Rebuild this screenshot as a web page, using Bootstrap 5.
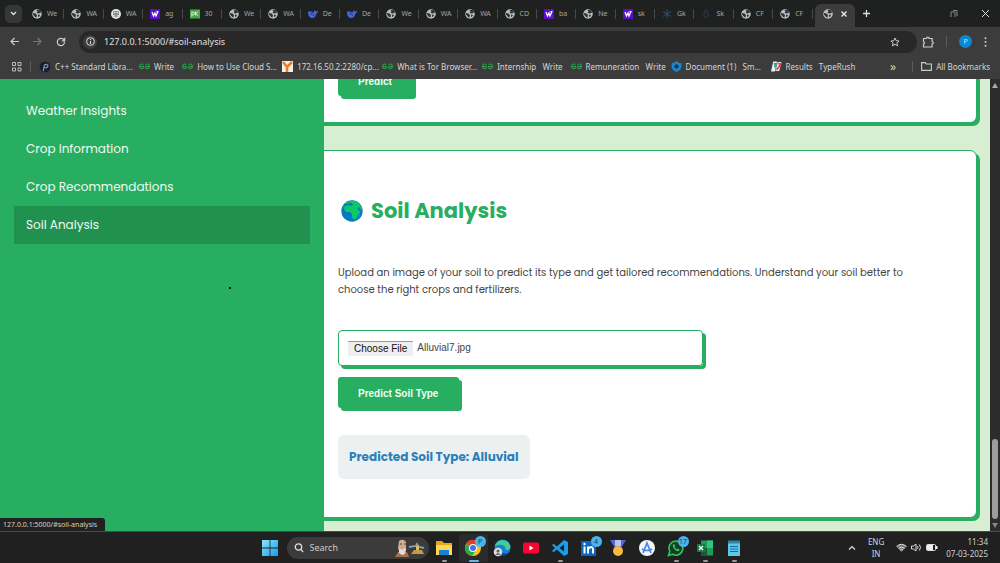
<!DOCTYPE html>
<html lang="en">
<head>
<meta charset="utf-8">
<meta name="viewport" content="width=device-width, initial-scale=1">
<title>Soil Analysis</title>
<link href="https://cdn.jsdelivr.net/npm/bootstrap@5.3.0/dist/css/bootstrap.min.css" rel="stylesheet">
<style>
:root{--leaf:#28ae60;--bar:#3c3c3c;--strip:#1f2120}
body{font-family:"Poppins","Inter",sans-serif;background:var(--strip)}
.chrome-ui,.os-bar,.status-tip{font-family:"Segoe UI","Noto Sans",sans-serif;font-size:8px;line-height:12px;color:#d2d2d2}
svg{display:block;flex:none}
button{font-family:inherit}
.ghost{background:none;border:0;padding:0;color:inherit;font-size:inherit;line-height:inherit}
/* tab strip */
.tab-strip{height:27px;background:var(--strip)}
.tab-menu{width:17px;height:18px;margin:0 3px 0 5px;border-radius:5px;background:#363837}
.tab-row{flex:1 1 0;min-width:0;height:27px}
.tab-item{flex:1 1 0;min-width:0;height:27px;padding-left:7px;gap:5px;color:#a4a4a4}
.tab-item .tab-name{font-size:7px;white-space:nowrap}
.tab-item::after{content:"";width:1px;height:10px;background:#484848;margin-left:auto}
.tab-item.current{background:var(--bar);border-radius:6px 6px 0 0;height:23px;align-self:end;color:#eee;margin-left:2px;padding:0 0 4px 8px;gap:8px}
.tab-item.current::after{display:none}
.strip-end{width:145px;padding:0 11px 0 8px}
/* toolbar */
.tool-row{background:var(--bar);height:29px;padding:0 10px}
.nav-btns{gap:14px;width:69px}
.address{background:#282828;border-radius:11px;height:22px;padding:0 17px 0 4px;gap:7px}
.info-dot{width:14px;height:14px;border-radius:50%;background:#3c3c3c}
.address input{background:none;border:0;outline:0;color:#e0e0e0;font-size:9px;height:16px;padding:0;min-width:0}
.tool-end{width:73px;padding:0 3px 0 5px}
.avatar{width:13px;height:13px;border-radius:50%;background:#0d87cf;color:#bfe2f7;font-size:7px}
.v-line{width:1px;height:11px;background:#5c5c5c;flex:none}
.mark-row{background:var(--bar);height:23px;padding:0 10px 2px 12px}
.mark-link{color:#d6d6d6;text-decoration:none;white-space:nowrap;gap:4px;padding-right:8px;flex:none}
.mark-wide{width:100px}
.more-marks{font-size:12px}
/* page */
.page-area{background:#d8eed3;min-height:0}
.side{flex:0 0 32.4%;background:var(--leaf);padding:13px 14px;z-index:1}
.side a{color:#eefaf2;font-size:12px;line-height:18px;padding:10px 12px;text-decoration:none;display:block}
.side a.active{background:#219150}
.pointer-dot{left:229px;top:208px;width:2px;height:2px;background:#06190e;z-index:2}
.feed{min-width:0;justify-content:flex-end;gap:27px;padding:0 13px 13px 0}
.panel,.file-box,.go{box-shadow:3px 3px 0 var(--leaf)}
/* the panels' left edge slides under the sidebar */
.panel{background:#fff;border:1px solid var(--leaf);border-radius:7px;margin-left:-16px;padding:44px 14px 38px 29px;flex:none}
.panel-prev{padding-top:0;padding-bottom:26px}
.panel h2{color:var(--leaf);font-size:21px;line-height:32px;font-weight:700;gap:8px;margin:0 0 37px;padding-left:3px}
.panel p{font-size:10px;line-height:17px;color:#444;margin:0 0 32px}
.file-box{max-width:365px;height:36px;border:1px solid var(--leaf);border-radius:4px;padding:0 9px;font-family:"Liberation Sans",sans-serif;font-size:10px;line-height:14px;color:#444;gap:4px;margin-bottom:11px;cursor:pointer}
.file-btn{background:#efefef;border-top:1px solid #999;color:#111;padding:0 6px}
.go{background:var(--leaf);color:#f2fff6;border:0;border-radius:3px;font-family:"Liberation Sans",sans-serif;font-weight:700;font-size:10px;line-height:15px;padding:9px 21px 7px 20px}
.result{background:#ecf0f1;border-radius:6px;color:#2980b9;font-weight:700;font-size:12px;line-height:18px;padding:13px 11px;margin-top:27px}
.scroller{width:10px;background:#2c2c2c;padding:4px 0 3px}
.thumb{width:6px;height:80px;background:#9d9d9d;border-radius:3px}
.status-tip{left:0;bottom:0;background:#202221;border-radius:0 3px 0 0;padding:1px 8px 0 3px;height:13px;font-size:7px;z-index:2}
/* taskbar */
.os-bar{height:32px;background:#202020;border-top:1px solid #474d49;display:grid;grid-template-columns:1fr auto 1fr}
.apps{padding-left:10px}
.search-box{width:142px;height:22px;border-radius:11px;background:#3b3b3b;padding:0 4px 0 7px;gap:6px;margin:0 1px 0 9px}
.search-box input{background:none;border:0;outline:0;padding:0;width:60px;font-size:9px;color:#ddd}
.search-box input::placeholder{color:#ccc;opacity:1}
.app{width:29px;height:28px;position:relative}
.app svg{width:18px;height:18px}
.app.open::after{content:"";position:absolute;bottom:0;left:12px;width:5px;height:2px;border-radius:1px;background:#999}
.app.front{background:#2b2b2b;border-radius:3px}
.app.front::after{left:10px;width:10px;background:#63b9ee}
.pip{position:absolute;top:2px;right:2px;width:11px;height:11px;border-radius:50%;background:#4db3ec;color:#123d5c;font-size:7px;line-height:11px;text-align:center}
.tray{gap:8px;padding-right:12px}
</style>
</head>
<body class="vh-100 d-flex flex-column overflow-hidden">
<svg width="0" height="0" class="position-absolute" aria-hidden="true">
<symbol id="globe" viewBox="0 0 20 20"><circle cx="10" cy="10" r="9.5" fill="#b9bec3"/><path d="M2 8l5 1 3 3-1 5-3-1-4-5zM9 2l2 3-2 2 3 2 5-1 1-2-3-4zM12 11l4 1-2 4-2-1z" fill="#303336"/></symbol>
<symbol id="seal" viewBox="0 0 20 20"><circle cx="10" cy="10" r="10" fill="#e4e4e4"/><path d="M5 5h10v4H5zM4 11h12M5 14h10M10 4v13" stroke="#777" stroke-width="1.5" fill="none"/></symbol>
<symbol id="wtile" viewBox="0 0 20 20"><path fill="#5a0fc8" d="M0 0h20v20H0z"/><path d="M4 6l3 8 3-6 2 6 4-9M13 5h4" fill="none" stroke="#fff" stroke-width="2.5"/></symbol>
<symbol id="px" viewBox="0 0 22 20"><path fill="#45a845" d="M0 0h22v20H0z"/><path d="M4 16V6h3a2 2 0 010 6H4M12 5v8M12 9l6-4M12 9l6 5" stroke="#dff5df" stroke-width="2" fill="none"/></symbol>
<symbol id="whale" viewBox="0 0 20 20"><path fill="#4565dd" d="M0 6c4-3 8 0 10 2 2-1 2-4 2-6 2 1 2 3 4 3l4-2c0 4-2 6-4 7 0 5-3 8-8 8S0 13 0 6z"/><path d="M5 9c3 0 5 3 7 5" stroke="#1f2120" stroke-width="1.500" fill="none"/></symbol>
<symbol id="flake" viewBox="0 0 20 20"><path d="M10 1v18M2 5l16 10M18 5L2 15" stroke="#2b4568" stroke-width="2.5"/></symbol>
<symbol id="drop" viewBox="0 0 20 20"><path d="M10 2c-4 6-5 8-4 11 2 5 7 5 8 0 1-3 0-5-4-11z" fill="none" stroke="#24334d" stroke-width="3"/></symbol>
<symbol id="gfg" viewBox="0 0 20 12"><path d="M8 3C5 0 1 2 1 6s5 5 7 2V6H1M12 3c3-3 7-1 7 3s-5 5-7 2V6h7" fill="none" stroke="#2f9a4b" stroke-width="2"/></symbol>
</svg>

<header class="chrome-ui flex-shrink-0">
  <div class="tab-strip d-flex align-items-center">
    <button class="ghost tab-menu d-flex align-items-center justify-content-center" aria-label="Search tabs"><svg width="7" height="5" viewBox="0 0 7 5"><path d="M1 1l2.500 2.500L6 1" fill="none" stroke="#ddd" stroke-width="1.400"/></svg></button>
    <nav class="tab-row d-flex" id="tabs" aria-label="Tabs"></nav>
    <div class="strip-end d-flex align-items-center">
      <button class="ghost" aria-label="New tab"><svg width="7" height="7" viewBox="0 0 7 7"><path d="M3.500 0v7M0 3.500h7" stroke="#ddd" stroke-width="1.300"/></svg></button>
      <button class="ghost ms-auto" aria-label="Restore"><svg width="8" height="7" viewBox="0 0 8 7"><path d="M1 7V2h4v5M3 .5h4V6" fill="none" stroke="#888"/></svg></button>
      <button class="ghost ms-4" aria-label="Close"><svg width="7" height="7" viewBox="0 0 7 7"><path d="M0 0l7 7M7 0L0 7" stroke="#ddd"/></svg></button>
    </div>
  </div>
  <div class="tool-row d-flex align-items-center">
    <div class="nav-btns d-flex align-items-center flex-shrink-0">
      <button class="ghost" aria-label="Back"><svg width="9" height="9" viewBox="0 0 9 9"><path d="M9 4.500H1M4.500 1L1 4.500 4.500 8" fill="none" stroke="#ccc" stroke-width="1.200"/></svg></button>
      <button class="ghost" aria-label="Forward"><svg width="9" height="9" viewBox="0 0 9 9"><path d="M0 4.500h8M4.500 1L8 4.500 4.500 8" fill="none" stroke="#777" stroke-width="1.200"/></svg></button>
      <button class="ghost" aria-label="Reload"><svg width="10" height="10" viewBox="0 0 10 10"><path d="M8.500 5A3.600 3.600 0 115 1.400c1.500 0 2.600.6 3.500 2M8.700.8v3H5.800" fill="none" stroke="#ccc" stroke-width="1.200"/></svg></button>
    </div>
    <div class="address d-flex align-items-center flex-grow-1">
      <span class="info-dot d-flex align-items-center justify-content-center"><svg width="9" height="9" viewBox="0 0 9 9"><circle cx="4.500" cy="4.500" r="3.900" fill="none" stroke="#ddd"/><path d="M4.500 4v3M4.500 2v1" stroke="#ddd"/></svg></span>
      <input class="flex-grow-1" aria-label="Address" value="127.0.0.1:5000/#soil-analysis">
      <svg width="10" height="10" viewBox="0 0 20 20"><path d="M10 2l2.400 5.400 5.800.6-4.400 3.900 1.300 5.800L10 14.700l-5.100 3 1.300-5.800L1.800 8l5.800-.6z" fill="none" stroke="#ccc" stroke-width="2"/></svg>
    </div>
    <div class="tool-end d-flex align-items-center justify-content-between flex-shrink-0">
      <svg width="12" height="12" viewBox="0 0 12 12"><path d="M1.500 2.500h3a1.300 1.300 0 012.600 0h3v3a1.200 1.200 0 010 2.400V11H1.500V8a1.300 1.300 0 000-2.500z" fill="none" stroke="#ccc" stroke-width="1.200"/></svg>
      <span class="v-line"></span>
      <button class="ghost avatar" aria-label="Profile">P</button>
      <svg width="3" height="10" viewBox="0 0 3 10" fill="#ccc"><circle cx="1.500" cy="1.200" r="1"/><circle cx="1.500" cy="5" r="1"/><circle cx="1.500" cy="8.800" r="1"/></svg>
    </div>
  </div>
  <nav class="mark-row d-flex align-items-center" aria-label="Bookmarks">
    <svg width="10" height="10" viewBox="0 0 10 10" fill="none" stroke="#bbb"><path d="M.5.5h3v3h-3zM6 .5h3v3H6zM.5 6h3v3h-3zM6 6h3v3H6z"/></svg>
    <span class="v-line mx-2"></span>
    <a href="#" class="mark-link mark-wide d-flex align-items-center"><svg width="12" height="12" viewBox="0 0 20 20"><circle cx="10" cy="10" r="9" fill="#16202e"/><path d="M7 17L9 7c3-3 8 0 5 3-2 2-5 1-6 0" fill="none" stroke="#8799b4" stroke-width="2"/></svg><span>C++ Standard Libra...</span></a>
    <a href="#" class="mark-link d-flex align-items-center"><svg width="11" height="7"><use href="#gfg"/></svg><span>Write</span></a>
    <a href="#" class="mark-link mark-wide d-flex align-items-center"><svg width="11" height="7"><use href="#gfg"/></svg><span>How to Use Cloud S...</span></a>
    <a href="#" class="mark-link mark-wide d-flex align-items-center"><svg width="11" height="11" viewBox="0 0 11 11"><path fill="#f4eee8" d="M0 0h11v11H0z"/><path d="M1 1l4 5v5M10 1L5 6" fill="none" stroke="#ee7c22" stroke-width="2.500"/></svg><span>172.16.50.2:2280/cp...</span></a>
    <a href="#" class="mark-link mark-wide d-flex align-items-center"><svg width="11" height="7"><use href="#gfg"/></svg><span>What is Tor Browser...</span></a>
    <a href="#" class="mark-link d-flex align-items-center"><svg width="11" height="7"><use href="#gfg"/></svg><span>Internship &nbsp; Write</span></a>
    <a href="#" class="mark-link mark-wide d-flex align-items-center"><svg width="11" height="7"><use href="#gfg"/></svg><span>Remuneration &nbsp; Write</span></a>
    <a href="#" class="mark-link mark-wide d-flex align-items-center"><svg width="11" height="11" viewBox="0 0 20 20"><path d="M10 0l4 3 5 1v6l-2 6-7 4-7-4-2-6V4l5-1z" fill="#1687d9"/><path d="M10 5l5 5-5 5-5-5z" fill="#183b60"/></svg><span>Document (1) &nbsp; Sm...</span></a>
    <a href="#" class="mark-link d-flex align-items-center"><svg width="11" height="11" viewBox="0 0 20 20"><path d="M4 1h7L7 19H0z" fill="#e8edf0"/><path d="M12 2h7l-4 16H8z" fill="#e8e8e8"/><path d="M5 5h4l-2 4 1 3" fill="none" stroke="#11a6a0" stroke-width="3"/><path d="M13 5h5l-3 5-5 6" fill="none" stroke="#df3d4b" stroke-width="3"/></svg><span>Results &nbsp; TypeRush</span></a>
    <span class="more-marks ms-auto">»</span>
    <span class="v-line ms-3 me-2"></span>
    <a href="#" class="mark-link d-flex align-items-center pe-0"><svg width="11" height="9" viewBox="0 0 11 9"><path d="M.6.6h3.600l1 1.400h5.200v6.400H.6z" fill="none" stroke="#ccc" stroke-width="1.100"/></svg><span>All Bookmarks</span></a>
  </nav>
</header>

<main class="page-area flex-grow-1 d-flex position-relative overflow-hidden">
  <nav class="side" aria-label="Sections">
    <a href="#weather">Weather Insights</a>
    <a href="#crop-info">Crop Information</a>
    <a href="#crop-rec">Crop Recommendations</a>
    <a href="#soil-analysis" class="active" aria-current="true">Soil Analysis</a>
  </nav>
  <div class="feed flex-grow-1 d-flex flex-column">
    <section class="panel panel-prev"><button class="go">Predict</button></section>
    <section class="panel" id="soil-analysis">
      <h2 class="d-flex align-items-center"><svg width="22" height="22" viewBox="0 0 22 22"><circle cx="11" cy="11" r="10.700" fill="#0878c4"/><path d="M5 3c3-2.500 8-3 11-1 2 1 4 4 5 6l-1 2-2-3-2 1 2 3 2 0-3 4-1 3-3 2-2-3 0-3-2-2-4 0-2-3 1-3 4-1 1 1 3-1-1-2-3 0-2 1-3 0z" fill="#0ac966"/><path d="M2 6l2 0-1 2zM18 14l1 1-1 3z" fill="#0ac966"/></svg>Soil Analysis</h2>
      <p>Upload an image of your soil to predict its type and get tailored recommendations. Understand your soil better to <br>choose the right crops and fertilizers.</p>
      <label class="file-box d-flex align-items-center" for="soil-image"><input type="file" id="soil-image" class="visually-hidden" accept="image/*"><span class="file-btn">Choose File</span><span>Alluvial7.jpg</span></label>
      <button class="go d-block">Predict Soil Type</button>
      <div class="d-flex"><output class="result" for="soil-image">Predicted Soil Type: Alluvial</output></div>
    </section>
  </div>
  <div class="scroller d-flex flex-column align-items-center flex-shrink-0">
    <svg width="6" height="5" viewBox="0 0 6 5"><path d="M3 0l3 5H0z" fill="#aaa"/></svg>
    <div class="thumb mt-auto mb-1"></div>
    <svg width="6" height="5" viewBox="0 0 6 5"><path d="M3 5l3-5H0z" fill="#888"/></svg>
  </div>
  <span class="pointer-dot position-absolute"></span>
  <div class="status-tip position-absolute">127.0.0.1:5000/#soil-analysis</div>
</main>

<footer class="os-bar flex-shrink-0">
  <span></span>
  <div class="apps d-flex align-items-center">
    <button class="ghost" aria-label="Start"><svg width="16" height="16" viewBox="0 0 16 16"><defs><linearGradient id="win" x2="1" y2="1"><stop stop-color="#8ce5fb"/><stop offset="1" stop-color="#149be8"/></linearGradient></defs><path d="M0 0h7.600v7.600H0zM8.400 0H16v7.600H8.400zM0 8.400h7.600V16H0zM8.400 8.400H16V16H8.400z" fill="url(#win)"/></svg></button>
    <div class="search-box d-flex align-items-center">
      <svg width="10" height="10" viewBox="0 0 10 10"><circle cx="4.500" cy="4" r="3.200" fill="none" stroke="#ddd" stroke-width="1.300"/><path d="M6.800 6.400l2.400 2.800" stroke="#ddd" stroke-width="1.300"/></svg>
      <input type="text" placeholder="Search" aria-label="Search">
      <svg class="ms-auto" width="30" height="18" viewBox="0 0 30 18"><path d="M0 18l3-5 9 0 2 5z" fill="#a96f4c"/><path d="M4 2q4-3 7 1v8l-2 4-4-1-2-5z" fill="#cfaa91"/><path d="M4 9l3 2 4-2-1 6-3 1-3-2z" fill="#e4ded6"/><path d="M5 5h2M9 5h2" stroke="#604636"/><path d="M14 8l7-1 1-2 2 3 5 1" fill="none" stroke="#8aa0a4" stroke-width="1.800"/><path d="M16 15l3-4h8l2 4z" fill="#c19a43"/><path d="M21 7h3v4h-3z" fill="#e0bd69"/></svg>
    </div>
    <button class="ghost app open d-flex align-items-center justify-content-center" aria-label="Files"><svg viewBox="0 0 18 18"><path d="M1 2h6l2 2h8v12H1z" fill="#e8a51b"/><path d="M1 6h16v10H1z" fill="#ffd65b"/><path d="M4 11h10v5H4z" fill="#1681ce"/></svg></button>
    <button class="ghost app open front d-flex align-items-center justify-content-center" aria-label="Chrome"><svg viewBox="0 0 18 18"><circle cx="9" cy="9" r="8" fill="#fbc116"/><path d="M9 9L2 5a8 8 0 0114 0z" fill="#e43e2b"/><path d="M9 9L2 5a8 8 0 006 12l4-6z" fill="#2da94f"/><circle cx="9" cy="9" r="4" fill="#fff"/><circle cx="9" cy="9" r="3" fill="#3978e6"/></svg><span class="pip">P</span></button>
    <button class="ghost app d-flex align-items-center justify-content-center" aria-label="Edge"><svg viewBox="0 0 18 18"><circle cx="9.500" cy="8.500" r="8" fill="#1683d3"/><path d="M2 7c2-7 13-8 15.500 0 0 3-2 4-5 4 1-4-3-7-10.500-4z" fill="#3fcf96"/><path d="M7 9c0 4 4 6 8 5-2 3-8 4-11 0z" fill="#0a4a9c"/><circle cx="5" cy="13" r="4.300" fill="#ddd"/><circle cx="5" cy="12" r="1.600" fill="#666"/><path d="M2.500 16q2.500-4 5 0z" fill="#666"/></svg></button>
    <button class="ghost app d-flex align-items-center justify-content-center" aria-label="YouTube"><svg viewBox="0 0 18 18"><rect x="1" y="3.500" width="16" height="11" rx="2" fill="#fa0532"/><path d="M7.500 6.500l4 2.500-4 2.500z" fill="#fff"/></svg></button>
    <button class="ghost app open d-flex align-items-center justify-content-center" aria-label="Code"><svg viewBox="0 0 18 18"><path d="M13 1l4 2v12l-4 2-7-6.500-3.500 2.700L1 12l3-3-3-3 1.500-1.200L6 7.500zM13 5.500L8.500 9l4.500 3.500z" fill="#1c9be8" fill-rule="evenodd"/></svg></button>
    <button class="ghost app d-flex align-items-center justify-content-center" aria-label="LinkedIn"><svg viewBox="0 0 18 18"><path d="M1 2h15v15H1z" fill="#0a66c2"/><path d="M4.500 7.500v7M8 14.500v-7M8 10q4-4 5 0v4.500" stroke="#fff" stroke-width="2" fill="none"/><circle cx="4.500" cy="5" r="1.200" fill="#fff"/></svg><span class="pip">4</span></button>
    <button class="ghost app d-flex align-items-center justify-content-center" aria-label="Rewards"><svg viewBox="0 0 18 18"><path d="M1 1h5l6 8H6zM17 1h-5L6 9h6z" fill="#5368d4"/><path d="M6 1h6v6H6z" fill="#b7c4f4"/><circle cx="9" cy="12" r="5" fill="#f8b941"/></svg></button>
    <button class="ghost app d-flex align-items-center justify-content-center" aria-label="Studio"><svg viewBox="0 0 18 18"><circle cx="9" cy="9" r="8" fill="#f4f6fa"/><path d="M5 14L9 4l4 10M4 10q5 3 10 0" fill="none" stroke="#4a86e8" stroke-width="1.700"/></svg></button>
    <button class="ghost app open d-flex align-items-center justify-content-center" aria-label="WhatsApp"><svg viewBox="0 0 18 18"><path d="M1.500 16.500l1.200-4A7 7 0 115.500 15.300z" fill="#173e25" stroke="#2cc65c" stroke-width="1.600"/><path d="M6 5.500c-1 3 3 7.500 6 6.500l.5-1.500-2-1-1 .8-2-2.300.8-1L7.500 5z" fill="#2cc65c"/></svg><span class="pip">17</span></button>
    <button class="ghost app open d-flex align-items-center justify-content-center" aria-label="Excel"><svg viewBox="0 0 18 18"><path d="M5 1.500h12v15H5z" fill="#1f9c5d"/><path d="M11 1.500h6V9h-6z" fill="#35c481"/><path d="M5 9h6v7.500H5z" fill="#185c37"/><path d="M1 5h8v8H1z" fill="#107c41"/><path d="M3 7l4 4M7 7l-4 4" stroke="#fff" stroke-width="1.300"/></svg></button>
    <button class="ghost app open d-flex align-items-center justify-content-center" aria-label="Notepad"><svg viewBox="0 0 18 18"><path d="M3 2h12v15H3z" fill="#5cc8ee"/><path d="M3 1.500h12v3H3z" fill="#2b84a6"/><path d="M5 7.500h8M5 10h8M5 12.500h8" stroke="#146a94"/></svg></button>
  </div>
  <div class="tray d-flex align-items-center justify-content-end">
    <svg width="8" height="5" viewBox="0 0 8 5"><path d="M1 4.500l3-3 3 3" fill="none" stroke="#ddd" stroke-width="1.200"/></svg>
    <div class="text-center mx-1">ENG<br>IN</div>
    <div class="d-flex gap-1">
    <svg width="11" height="9" viewBox="0 0 11 9"><path d="M.5 3.500q5-4.500 10 0L5.500 9z" fill="#777"/><path d="M.5 3.500q5-4.500 10 0M2.500 5.300q3-2.600 6 0M4 7q1.500-1.300 3 0" fill="none" stroke="#ddd"/></svg>
    <svg width="11" height="9" viewBox="0 0 11 9"><path d="M.5 3h2L5 1v7L2.500 6h-2zM6.500 3q1 1.500 0 3M8.300 1.500q2.500 3 0 6" fill="none" stroke="#ddd"/></svg>
    <svg width="12" height="9" viewBox="0 0 12 9"><rect x=".5" y="1.500" width="9" height="6" rx="1" fill="none" stroke="#ddd"/><path d="M1 2h6v5H1zM10 3h1.500v3H10z" fill="#eee"/></svg>
    </div>
    <div class="text-end">11:34<br>07-03-2025</div>
  </div>
</footer>
<script>
const tabs = [['globe','We'],['globe','WA'],['seal','WA'],['wtile','ag'],['px','30'],['globe','We'],['globe','WA'],['whale','De'],['whale','De'],['globe','We'],['globe','WA'],['globe','WA'],['globe','CD'],['wtile','ba'],['globe','Ne'],['wtile','sk'],['flake','Gk'],['drop','Sk'],['globe','CF'],['globe','CF']];
const icon = n => `<svg width="10" height="10"><use href="#${n}"/></svg>`;
document.getElementById('tabs').innerHTML = tabs.map(([i, t]) =>
  `<div class="tab-item d-flex align-items-center">${icon(i)}<span class="tab-name">${t}</span></div>`).join('') +
  `<div class="tab-item current d-flex align-items-center">${icon('globe')}<button class="ghost" aria-label="Close tab"><svg width="6" height="6" viewBox="0 0 6 6"><path d="M.5.5l5 5M5.500.5l-5 5" stroke="#eee" stroke-width="1.300"/></svg></button></div>`;
</script>
<script src="https://cdn.jsdelivr.net/npm/bootstrap@5.3.0/dist/js/bootstrap.bundle.min.js"></script>
</body>
</html>
